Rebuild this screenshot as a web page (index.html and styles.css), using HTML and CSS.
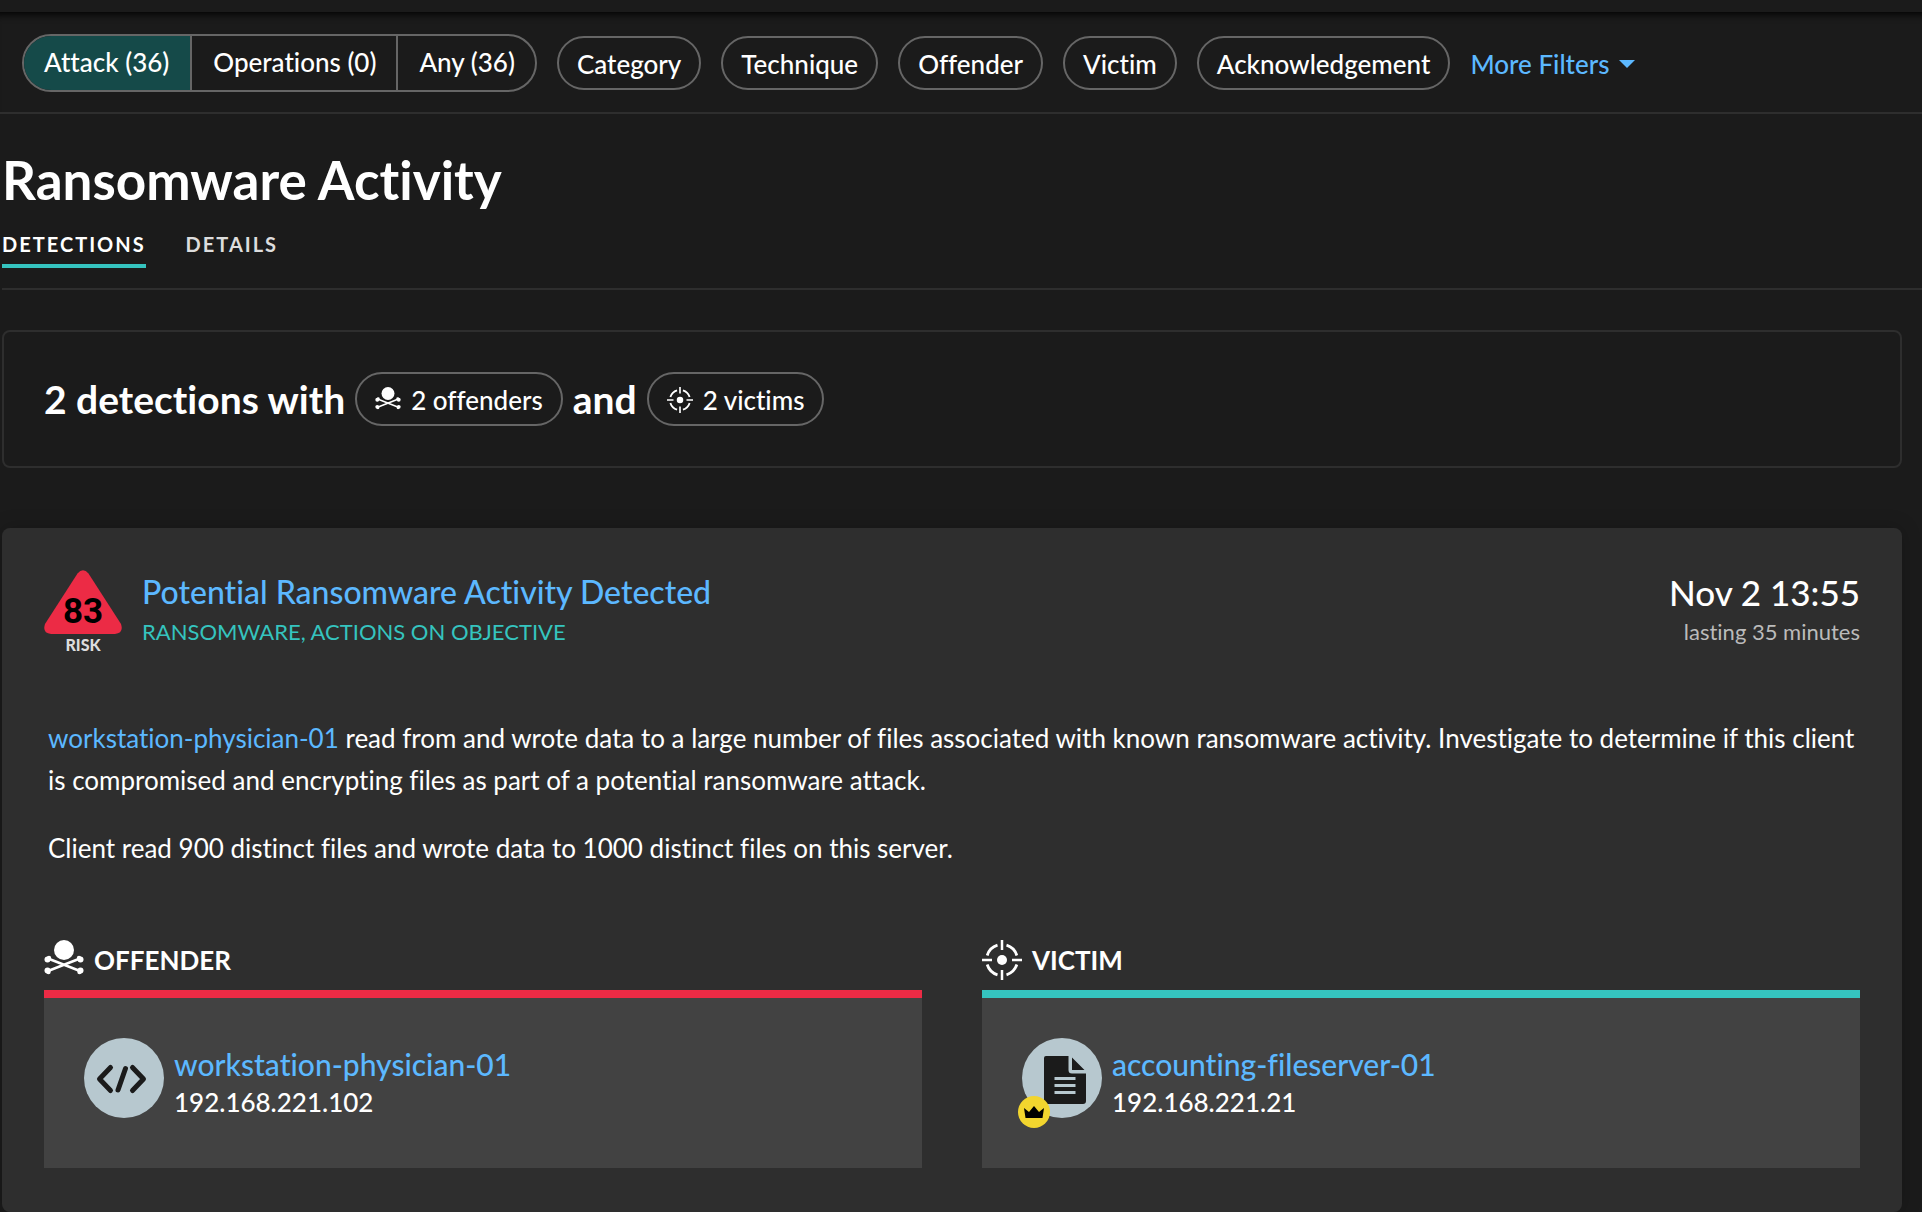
FILE: index.html
```html
<!DOCTYPE html>
<html lang="en">
<head>
<meta charset="utf-8">
<title>Ransomware Activity</title>
<meta name="viewport" content="width=device-width, initial-scale=1">
<link rel="stylesheet" href="styles.css">
</head>
<body>
<svg class="sprite" aria-hidden="true">
  <symbol id="skull" viewBox="0 0 40 40">
    <circle cx="20" cy="10" r="10"/>
    <path d="M4 18.500L36 31M36 18.500L4 31" fill="none" stroke="currentColor" stroke-width="2.500"/>
    <circle cx="3.500" cy="19.500" r="3"/><circle cx="5" cy="18" r="2.200"/>
    <circle cx="36.500" cy="19.500" r="3"/><circle cx="35" cy="18" r="2.200"/>
    <circle cx="3.500" cy="30.500" r="3"/><circle cx="4.500" cy="32" r="2.200"/>
    <circle cx="36.500" cy="30.500" r="3"/><circle cx="35.500" cy="32" r="2.200"/>
  </symbol>
  <symbol id="target" viewBox="0 0 40 40">
    <circle cx="20" cy="20" r="5"/>
    <path d="M20 0v10M20 30v10M0 20h10M30 20h10" fill="none" stroke="currentColor" stroke-width="2.500"/>
    <path d="M24.500 5.200A15.500 15.500 0 0 1 34.800 15.500M34.800 24.500A15.500 15.500 0 0 1 24.500 34.800M15.500 34.800A15.500 15.500 0 0 1 5.200 24.500M5.200 15.500A15.500 15.500 0 0 1 15.500 5.200" fill="none" stroke="currentColor" stroke-width="2.800"/>
  </symbol>
</svg>

<div class="topbar"></div>
<nav class="filters" aria-label="Filters">
  <div class="segmented">
    <button type="button" class="segment active" aria-pressed="true">Attack (36)</button>
    <button type="button" class="segment">Operations (0)</button>
    <button type="button" class="segment">Any (36)</button>
  </div>
  <button type="button" class="pill">Category</button>
  <button type="button" class="pill">Technique</button>
  <button type="button" class="pill">Offender</button>
  <button type="button" class="pill">Victim</button>
  <button type="button" class="pill">Acknowledgement</button>
  <button type="button" class="more">More Filters
    <svg class="caret" viewBox="0 0 16 8" aria-hidden="true"><path d="M0 0h16L8 8z"/></svg>
  </button>
</nav>

<main class="page">
  <header class="heading">
    <h1>Ransomware Activity</h1>
    <nav class="tabs" aria-label="Views">
      <a href="#detections" class="tab current">DETECTIONS</a>
      <a href="#details" class="tab">DETAILS</a>
    </nav>
  </header>

  <section class="summary">
    <span>2 detections with</span>
    <button type="button" class="pill chip"><svg class="chip-icon" aria-hidden="true"><use href="#skull"/></svg>2 offenders</button>
    <span>and</span>
    <button type="button" class="pill chip"><svg class="chip-icon" aria-hidden="true"><use href="#target"/></svg>2 victims</button>
  </section>

  <article class="card" id="detections">
    <header class="card-head">
      <div class="risk">
        <svg class="risk-sign" viewBox="0 0 78 64" role="img" aria-label="Risk score 83">
          <path d="M33.500 3.500Q39-3 44.500 3.500L77 54Q80 63 71 64H7Q-2 63 1 54Z"/>
          <text x="39" y="53" text-anchor="middle">83</text>
        </svg>
        <span class="risk-label">RISK</span>
      </div>
      <div class="card-title">
        <h2><a href="#detection">Potential Ransomware Activity Detected</a></h2>
        <p class="category">RANSOMWARE, ACTIONS ON OBJECTIVE</p>
      </div>
      <div class="when">
        <time>Nov 2 13:55</time>
        <span class="duration">lasting 35 minutes</span>
      </div>
    </header>

    <div class="description">
      <p><a href="#workstation">workstation-physician-01</a> read from and wrote data to a large number of files associated with known ransomware activity. Investigate to determine if this client is compromised and encrypting files as part of a potential ransomware attack.</p>
      <p>Client read 900 distinct files and wrote data to 1000 distinct files on this server.</p>
    </div>

    <div class="parties">
      <section class="party offender">
        <h3><svg class="party-icon" aria-hidden="true"><use href="#skull"/></svg>OFFENDER</h3>
        <div class="device">
          <div class="avatar">
            <svg viewBox="0 0 80 80" aria-hidden="true"><path d="M26.500 29.500L15.500 41L26.500 52.500M48.500 29.500L59.500 41L48.500 52.500M41.500 30.500L34 52" fill="none" stroke="#1b1b1b" stroke-width="5" stroke-linecap="round" stroke-linejoin="round"/></svg>
          </div>
          <div class="device-text">
            <a href="#workstation">workstation-physician-01</a>
            <span>192.168.221.102</span>
          </div>
        </div>
      </section>
      <section class="party victim">
        <h3><svg class="party-icon" aria-hidden="true"><use href="#target"/></svg>VICTIM</h3>
        <div class="device">
          <div class="avatar">
            <svg viewBox="0 0 80 80" aria-hidden="true">
              <path d="M24 18H46.500V32Q46.500 35.500 50 35.500H64V63Q64 66 61 66H25Q22 66 22 63V20Q22 18 24 18ZM50 19.500L62.500 32H50Z" fill="#1b1b1b"/>
              <path d="M32.500 40.500h21M32.500 47.500h21M32.500 54.500h21" fill="none" stroke="#b7c8cf" stroke-width="3"/>
            </svg>
            <svg class="crown" viewBox="0 0 32 32" aria-hidden="true"><circle cx="16" cy="16" r="16" fill="#f2d52e"/><path d="M6 12L11 16L16 10L21 16L26 12L24.500 22H7.500Z"/></svg>
          </div>
          <div class="device-text">
            <a href="#fileserver">accounting-fileserver-01</a>
            <span>192.168.221.21</span>
          </div>
        </div>
      </section>
    </div>
  </article>
</main>
</body>
</html>
```
FILE: styles.css
```css
* { box-sizing: border-box; }

body {
  margin: 0;
  background: #1b1b1b;
  color: #fff;
  font-family: Lato, "Liberation Sans", sans-serif;
  font-size: 26px;
  font-weight: 500;
  line-height: 32px;
  font-variant-ligatures: none;
}

h1, h2, h3, p { margin: 0; }
a { color: #5cb8ff; text-decoration: none; }
button { font: inherit; font-variant-ligatures: none; color: inherit; cursor: pointer; background: none; border: 0; padding: 0; }
svg { fill: currentColor; }
.sprite { display: none; }

.topbar { height: 12px; }

.filters {
  display: flex;
  align-items: center;
  gap: 20px;
  padding: 22px 22px 20px;
  border-bottom: 2px solid #2e2e2e;
  box-shadow: inset 0 10px 8px -8px #000;
}

.segmented {
  display: flex;
  height: 58px;
  border: 2px solid #666;
  border-radius: 29px;
  overflow: hidden;
}
.segment { padding: 0 20px 2px 20px; }
.segment + .segment { padding-left: 21px; border-left: 2px solid #666; }
.segment.active { padding-right: 21px; background: #154a49; }

.pill {
  height: 54px;
  padding: 2px 18px 0;
  border: 2px solid #666;
  border-radius: 27px;
}

.more { display: flex; align-items: center; gap: 10px; padding-top: 2px; color: #5cb8ff; }
.caret { width: 16px; height: 8px; }

.page { padding-left: 2px; }

.heading { padding-top: 34px; border-bottom: 2px solid #2e2e2e; }
h1 { font-size: 53px; line-height: 64px; font-weight: 700; }

.tabs { display: flex; gap: 40px; padding: 16px 0 20px; }
.tab {
  padding-bottom: 4px;
  border-bottom: 4px solid transparent;
  color: #ddd;
  font-size: 20px;
  font-weight: 700;
  letter-spacing: 2px;
}
.tab.current { color: #fff; border-color: #35c4bf; }

.summary {
  display: flex;
  align-items: center;
  gap: 10px;
  margin: 40px 20px 0 0;
  padding: 40px;
  border: 2px solid #2e2e2e;
  border-radius: 8px;
  font-size: 39px;
  font-weight: 700;
}
.chip { display: flex; align-items: center; gap: 10px; font-size: 26px; font-weight: 500; }
.chip-icon { width: 26px; height: 26px; }

.card {
  margin: 60px 20px 0 0;
  padding: 42px 42px 44px;
  border-radius: 8px;
  background: #2e2e2e;
  box-shadow: 0 0 20px rgba(0, 0, 0, 0.2);
}

.card-head { display: flex; gap: 20px; }
.risk { display: flex; flex-direction: column; align-items: center; width: 78px; }
.risk-sign { width: 78px; height: 64px; fill: #ec2b45; }
.risk-sign text { fill: #000; font: 700 35px Roboto, sans-serif; }
.risk-label { color: #ddd; font-size: 16px; line-height: 22px; font-weight: 900; }

.card-title { flex: 1; }
h2 { font-size: 32px; line-height: 44px; font-weight: 500; }
.category { color: #35c4bf; font-size: 22px; line-height: 36px; font-weight: 400; }

.when { display: flex; flex-direction: column; align-items: flex-end; }
time { font-size: 35px; line-height: 44px; }
.duration { color: #bbb; font-size: 22px; line-height: 36px; font-weight: 400; }

.description { padding: 61px 0 1px 4px; line-height: 42px; font-weight: 400; }
.description p + p { margin-top: 26px; }

.parties { display: grid; grid-template-columns: 1fr 1fr; gap: 60px; padding-top: 70px; }
h3 { display: flex; align-items: center; gap: 10px; height: 50px; padding-bottom: 10px; font-size: 26px; font-weight: 700; }
.party-icon { width: 40px; height: 40px; }

.device {
  display: flex;
  gap: 10px;
  height: 178px;
  padding: 40px;
  border-top: 8px solid #ec2b45;
  background: #424242;
}
.victim .device { border-color: #35c4bf; }

.avatar { position: relative; width: 80px; height: 80px; border-radius: 50%; background: #b7c8cf; }
.avatar svg { display: block; }
.avatar .crown { position: absolute; left: -4px; bottom: -10px; width: 32px; height: 32px; fill: #000; }

.device-text { display: flex; flex-direction: column; padding-top: 4px; }
.device-text a { font-size: 30px; line-height: 44px; }
.device-text span { line-height: 32px; }
```
